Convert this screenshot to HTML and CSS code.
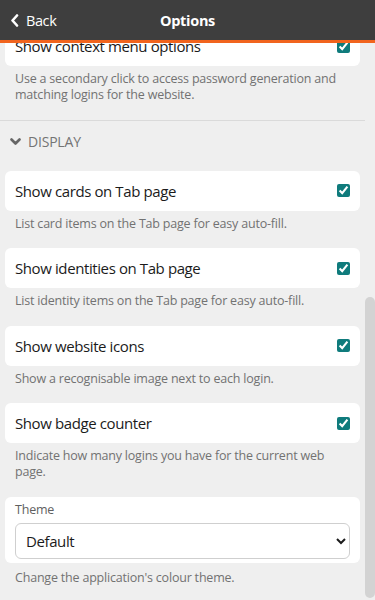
FILE: index.html
```html
<!DOCTYPE html>
<html lang="en">
<head>
<meta charset="utf-8">
<title>Options</title>
<link rel="stylesheet" href="styles.css">
</head>
<body>
<header class="topbar">
  <div class="back">
    <svg class="back-icon" width="9" height="13" viewBox="0 0 9 13"><path d="M7 1.5 L2.5 6.5 L7 11.5" fill="none" stroke="#fff" stroke-width="2.6" stroke-linecap="round" stroke-linejoin="round"/></svg>
    <span>Back</span>
  </div>
  <h1 class="title">Options</h1>
  <div class="spacer"></div>
</header>
<div class="body">
  <main class="viewport">
    <div class="content">
      <div class="card row">
        <span class="label">Show context menu options</span>
        <input type="checkbox" checked>
      </div>
      <p class="desc">Use a secondary click to access password generation and matching logins for the website.</p>
      <div class="section-head">
        <svg width="11" height="8" viewBox="0 0 11 8"><path d="M1.5 1.5 L5.5 5.5 L9.5 1.5" fill="none" stroke="#666" stroke-width="2.6" stroke-linecap="round" stroke-linejoin="round"/></svg>
        <span>Display</span>
      </div>
      <div class="card row">
        <span class="label">Show cards on Tab page</span>
        <input type="checkbox" checked>
      </div>
      <p class="desc">List card items on the Tab page for easy auto-fill.</p>
      <div class="card row">
        <span class="label">Show identities on Tab page</span>
        <input type="checkbox" checked>
      </div>
      <p class="desc">List identity items on the Tab page for easy auto-fill.</p>
      <div class="card row">
        <span class="label">Show website icons</span>
        <input type="checkbox" checked>
      </div>
      <p class="desc">Show a recognisable image next to each login.</p>
      <div class="card row">
        <span class="label">Show badge counter</span>
        <input type="checkbox" checked>
      </div>
      <p class="desc">Indicate how many logins you have for the current web page.</p>
      <div class="card field">
        <label class="field-label" for="theme">Theme</label>
        <select id="theme" class="select">
          <option>Default</option>
          <option>Light</option>
          <option>Dark</option>
        </select>
      </div>
      <p class="desc last">Change the application's colour theme.</p>
    </div>
  </main>
  <div class="scrollbar"><div class="thumb"></div></div>
</div>
</body>
</html>
```

FILE: styles.css
```css
* { box-sizing: border-box; }
html, body { margin: 0; padding: 0; }
body {
  width: 375px;
  height: 600px;
  overflow: hidden;
  background: #efefef;
  font-family: "Open Sans", "Noto Sans", sans-serif;
  display: flex;
  flex-direction: column;
}
.topbar {
  height: 43px;
  flex: none;
  background: #3e3e3e;
  border-bottom: 3px solid #f1641e;
  display: flex;
  align-items: center;
  color: #fff;
  padding: 0 10px;
}
.back {
  display: flex;
  align-items: center;
  gap: 7px;
  font-size: 14.5px;
  letter-spacing: -0.4px;
  width: 80px;
}
.back-icon { display: block; }
.title {
  flex: 1;
  margin: 0;
  text-align: center;
  font-size: 14.5px;
  letter-spacing: -0.3px;
  font-weight: 700;
}
.spacer { width: 80px; }
.body {
  flex: 1;
  display: flex;
  min-height: 0;
}
.viewport {
  flex: 1;
  overflow: hidden;
}
.content {
  margin-top: -17px;
  display: flex;
  flex-direction: column;
}
.card {
  background: #fff;
  border-radius: 6px;
  margin: 0 5px;
}
.row {
  height: 40px;
  display: flex;
  align-items: center;
  justify-content: space-between;
  padding: 0 10px;
}
.label {
  font-size: 15px;
  letter-spacing: -0.4px;
  color: #1b1b1b;
}
.row input {
  width: 13px;
  height: 13px;
  margin: 0;
  accent-color: #0f7b7c;
}
.desc {
  margin: 0;
  padding: 5px 15px 16.5px;
  font-size: 12.5px;
  letter-spacing: -0.2px;
  line-height: 16px;
  color: #727272;
}
.section-head {
  border-top: 1px solid #dadada;
  padding: 12px 10px 20px;
  display: flex;
  align-items: center;
  gap: 7px;
  font-size: 14px;
  letter-spacing: -0.2px;
  line-height: 18px;
  text-transform: uppercase;
  color: #747474;
}
.section-head svg { display: block; }
.field {
  padding: 5px 10px 4px;
  display: flex;
  flex-direction: column;
  gap: 5px;
}
.field-label {
  font-size: 12.5px;
  letter-spacing: -0.2px;
  line-height: 16px;
  color: #5f5f5f;
}
.select {
  height: 36px;
  width: 100%;
  border: 1px solid #cfcfcf;
  border-radius: 6px;
  background: #fff;
  font-family: inherit;
  font-size: 15px;
  letter-spacing: -0.4px;
  color: #1b1b1b;
  padding: 0 6px;
}
.desc.last { padding-top: 7px; }
.scrollbar {
  width: 10px;
  flex: none;
  padding-top: 254px;
  padding-bottom: 2px;
  display: flex;
}
.thumb {
  width: 9px;
  flex: 1;
  background: #d3d3d3;
  border-radius: 5px;
}
```
